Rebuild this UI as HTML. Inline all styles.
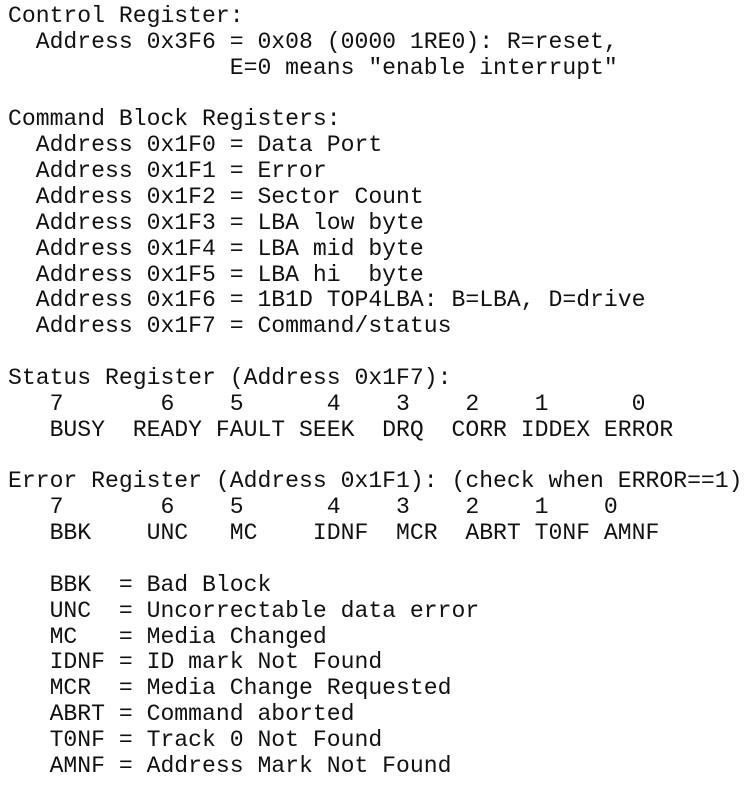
<!DOCTYPE html>
<html><head><meta charset="utf-8"><style>
html,body{margin:0;padding:0;background:#fff;width:748px;height:789px;overflow:hidden}
pre{margin:0;padding:4px 0 0 8px;font-family:"Liberation Mono","Courier New",monospace;font-size:23.1px;line-height:25.86px;color:#111;}
</style></head><body><pre>Control Register:
  Address 0x3F6 = 0x08 (0000 1RE0): R=reset,
                E=0 means "enable interrupt"

Command Block Registers:
  Address 0x1F0 = Data Port
  Address 0x1F1 = Error
  Address 0x1F2 = Sector Count
  Address 0x1F3 = LBA low byte
  Address 0x1F4 = LBA mid byte
  Address 0x1F5 = LBA hi  byte
  Address 0x1F6 = 1B1D TOP4LBA: B=LBA, D=drive
  Address 0x1F7 = Command/status

Status Register (Address 0x1F7):
   7       6    5      4    3    2    1      0
   BUSY  READY FAULT SEEK  DRQ  CORR IDDEX ERROR

Error Register (Address 0x1F1): (check when ERROR==1)
   7       6    5      4    3    2    1    0
   BBK    UNC   MC    IDNF  MCR  ABRT T0NF AMNF

   BBK  = Bad Block
   UNC  = Uncorrectable data error
   MC   = Media Changed
   IDNF = ID mark Not Found
   MCR  = Media Change Requested
   ABRT = Command aborted
   T0NF = Track 0 Not Found
   AMNF = Address Mark Not Found</pre></body></html>
